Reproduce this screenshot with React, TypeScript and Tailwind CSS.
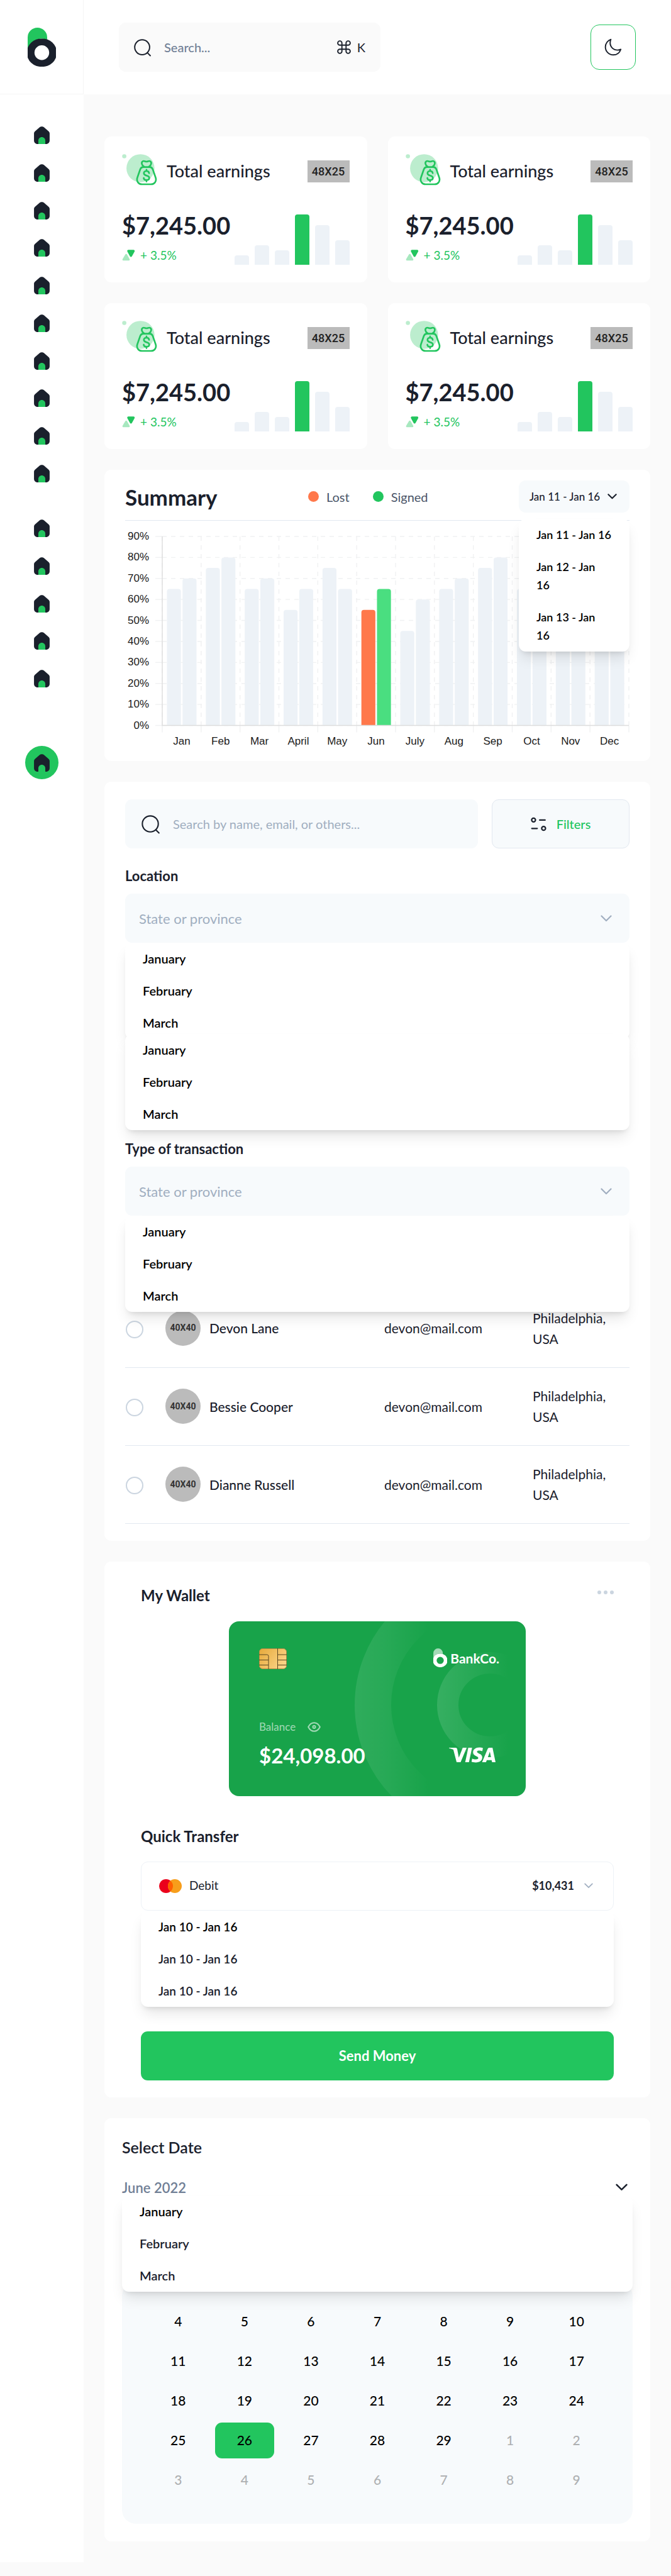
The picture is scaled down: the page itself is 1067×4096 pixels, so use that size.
import { useState } from "react";
import { SiVisa } from "react-icons/si";

function LogoMark({ className, pill, ring }: { className: string; pill: string; ring: string }) {
  return (
    <svg viewBox="0 0 45 62" className={className} fill="none" aria-hidden="true">
      <path d="M0 15.5a15.5 15.5 0 0 1 31 0V19.100A22.300 22.300 0 0 0 0.200 39.750H0Z" fill={pill} />
      <path
        fillRule="evenodd"
        clipRule="evenodd"
        d="M22.500 17.500a22.300 22.300 0 1 1 0 44.500a22.300 22.300 0 1 1 0 -44.500ZM22.500 28a11.700 11.700 0 1 0 0 23.400a11.700 11.700 0 1 0 0 -23.400Z"
        fill={ring}
      />
    </svg>
  );
}

function HomeIcon({ door = "#22C55E" }: { door?: string }) {
  return (
    <svg viewBox="0 0 18 21" className="h-[29px] w-[25px]" fill="none" aria-hidden="true">
      <path
        d="M0 8.84719C0 7.99027 0.366443 7.17426 1.00691 6.60496L6.34255 1.86217C7.85809 0.515019 10.1419 0.515019 11.6575 1.86217L16.9931 6.60496C17.6336 7.17426 18 7.99027 18 8.84719V17C18 19.2091 16.2091 21 14 21H4C1.79086 21 0 19.2091 0 17V8.84719Z"
        fill="#1A202C"
      />
      <path d="M5 17C5 14.7909 6.79086 13 9 13C11.2091 13 13 14.7909 13 17V21H5V17Z" fill={door} />
    </svg>
  );
}

function SearchIcon({ className }: { className: string }) {
  return (
    <svg viewBox="0 0 21 22" className={className} fill="none" stroke="#1A202C" strokeWidth="1.5" strokeLinecap="round" aria-hidden="true">
      <circle cx="9.8" cy="10.68" r="8.99" />
      <path d="M16.05 17.39L19.58 20.91" />
    </svg>
  );
}

function Chevron({ className, color, width = 2 }: { className: string; color: string; width?: number }) {
  return (
    <svg viewBox="0 0 18 11" className={className} fill="none" stroke={color} strokeWidth={width} strokeLinecap="round" strokeLinejoin="round" aria-hidden="true">
      <path d="M1.500 1.500L9 9L16.500 1.500" />
    </svg>
  );
}

function MoneyBag() {
  return (
    <svg viewBox="0 0 40 39" className="h-[54px] w-[56px] shrink-0" fill="none" strokeLinecap="round" strokeLinejoin="round" aria-hidden="true">
      <circle cx="21" cy="16.2" r="16.1" fill="#22C55E" fillOpacity="0.3" />
      <circle cx="2.4" cy="2.5" r="2.4" fill="#22C55E" fillOpacity="0.3" />
      <g stroke="#22C55E" strokeWidth="1.9">
        <path d="M24.300 14.900h7.200c1.700 0 3 1 3.600 2.600l3.200 9.200c1.500 4.300-1 8-5.300 8H22.800c-4.300 0-6.800-3.700-5.300-8l3.200-9.200c.6-1.600 1.900-2.600 3.600-2.600Z" />
        <path d="M25 14.400c-3-2-3.200-5.100-1.300-6.200 1.400-.8 2.600.5 4.200.5s2.800-1.300 4.200-.5c1.900 1.100 1.700 4.200-1.300 6.200" />
        <path d="M30.900 21.900c-.2-1.600-1.400-2.400-3-2.400s-3 .9-3 2.500c0 3.600 6.200 1.800 6.200 5.300 0 1.700-1.500 2.600-3.200 2.600s-3.100-.9-3.200-2.500M27.900 17.900v1.600M27.900 29.900v1.600" />
      </g>
    </svg>
  );
}

const miniBars = ["h-[15px]", "h-[31px]", "h-[23px]", "h-[80px]", "h-[63px]", "h-[39px]"];

function EarningCard() {
  return (
    <article className="flex flex-col justify-between gap-7 rounded-[11px] bg-white p-7">
      <div className="flex items-center">
        <MoneyBag />
        <h2 className="ml-[15px] text-[27px] leading-[36px] font-medium">Total earnings</h2>
        <span className="ml-auto flex h-[35px] w-[67px] items-center justify-center bg-[#BBBBBB] text-[18px] font-medium text-[#222] [font-family:Roboto,sans-serif]">
          48X25
        </span>
      </div>
      <div className="flex items-end justify-between">
        <div>
          <p className="text-[38px] leading-[63px] font-bold">$7,245.00</p>
          <p className="flex items-center gap-2 text-[19px] leading-[31px] text-[#22C55E]">
            <svg viewBox="0 0 15 13" className="h-[18px] w-[21px]" strokeLinejoin="round" aria-hidden="true">
              <path d="M7.200 1.500h6L10.200 7Z" fill="#22C55E" stroke="#22C55E" strokeWidth="2.600" />
              <path d="M1.500 11.400h6.200L4.700 6Z" fill="#A7E8BF" stroke="#A7E8BF" strokeWidth="2.200" />
            </svg>
            + 3.5%
          </p>
        </div>
        <div className="flex items-end gap-[9px]" role="img" aria-label="Earnings trend">
          {miniBars.map((h, i) => (
            <span key={i} className={`w-[23px] rounded-t-[4px] ${h} ${i === 3 ? "bg-[#22C55E]" : "bg-[#EDF2F7]"}`} />
          ))}
        </div>
      </div>
    </article>
  );
}

const months: [string, number, number][] = [
  ["Jan", 65, 70],
  ["Feb", 75, 80],
  ["Mar", 65, 70],
  ["April", 55, 65],
  ["May", 75, 65],
  ["Jun", 55, 65],
  ["July", 45, 60],
  ["Aug", 65, 70],
  ["Sep", 75, 80],
  ["Oct", 65, 60],
  ["Nov", 60, 65],
  ["Dec", 60, 65],
];

function SummaryChart() {
  const x0 = 59;
  const x1 = 801;
  const yTop = 13;
  const yBase = 313.5;
  const col = (x1 - x0) / 12;
  const y = (v: number) => yBase - (v * (yBase - yTop)) / 90;
  return (
    <svg viewBox="0 0 802 350" className="mt-3 block w-full" role="img" aria-label="Lost and signed per month">
      <g stroke="#F0F1F2" strokeWidth="1.400">
        {Array.from({ length: 10 }, (_, i) => (
          <g key={i}>
            <path d={`M${x0} ${y(i * 10)}H${x1}`} strokeDasharray="7 7" />
            <path d={`M${x0 - 11} ${y(i * 10)}H${x0}`} />
          </g>
        ))}
        {Array.from({ length: 13 }, (_, i) => (
          <g key={i}>
            <path d={`M${x0 + i * col} ${yTop}V${yBase}`} strokeDasharray="7 7" />
            <path d={`M${x0 + i * col} ${yBase}v11`} />
          </g>
        ))}
      </g>
      {months.map(([name, a, b], i) => {
        const left = x0 + i * col + 7.5;
        const hot = name === "Jun";
        return [a, b].map((v, j) => {
          const bx = left + j * 24.8;
          return (
            <path
              key={`${name}${j}`}
              d={`M${bx} ${yBase}V${y(v) + 4}q0 -4 4 -4h14.200q4 0 4 4V${yBase}Z`}
              fill={hot ? (j === 0 ? "#FF784B" : "#4ADE80") : "#EDF2F7"}
            />
          );
        });
      })}
      <path d={`M${x0} ${yTop}V${yBase}H${x1}`} fill="none" stroke="#DDDDDD" strokeWidth="1.400" />
      <g fill="#1A1A1A" fontSize="17" fontFamily="Liberation Sans, Arial, sans-serif">
        {Array.from({ length: 10 }, (_, i) => (
          <text key={i} x="38" y={y(i * 10) + 5} textAnchor="end">
            {`${i * 10}%`}
          </text>
        ))}
        {months.map(([name], i) => (
          <text key={name} x={x0 + (i + 0.5) * col} y="344" textAnchor="middle">
            {name}
          </text>
        ))}
      </g>
    </svg>
  );
}

const menuShadow = "shadow-[0_14px_21px_-4px_rgba(0,0,0,0.1),0_6px_8px_-5px_rgba(0,0,0,0.12)]";

function Menu({ items, className = "", size = "text-[20px]", tail = "text-black" }: { items: string[]; className?: string; size?: string; tail?: string }) {
  return (
    <ul className={`relative overflow-hidden rounded-[11px] bg-white ${menuShadow} ${className}`}>
      {items.map((item, i) => (
        <li key={i}>
          <button type="button" className={`block w-full px-7 py-[11px] text-left leading-[29px] font-semibold ${size} ${i === 0 ? "text-black" : tail}`}>
            {item}
          </button>
        </li>
      ))}
    </ul>
  );
}

function Field({ id, label }: { id: string; label: string }) {
  return (
    <>
      <p id={id} className="mb-3 text-[22px] leading-[33px] font-bold">{label}</p>
      <button
        type="button"
        aria-labelledby={id}
        aria-haspopup="listbox"
        className="flex h-[78px] w-full items-center justify-between rounded-[11px] bg-[#F7FAFC] pr-7 pl-[22px] text-[22px] text-[#A0AEC0]"
      >
        State or province
        <Chevron className="h-[11px] w-[18px]" color="#A0AEC0" width={2.2} />
      </button>
    </>
  );
}

const monthItems = ["January", "February", "March"];
const people = ["Devon Lane", "Bessie Cooper", "Dianne Russell"];

const calendar: number[] = [
  4, 5, 6, 7, 8, 9, 10, 11, 12, 13, 14, 15, 16, 17, 18, 19, 20, 21, 22, 23, 24, 25, 26, 27, 28, 29, 1, 2, 3, 4, 5, 6, 7, 8, 9,
];

function Sidebar() {
  return (
    <aside className="mb-6 flex w-[133px] shrink-0 flex-col items-center bg-white">
      <a href="#" aria-label="BankCo" className="flex h-[150px] w-full items-center justify-center border-r border-b border-[#F5F5F5]">
        <LogoMark className="h-[62px] w-[45px]" pill="#22C55E" ring="#1A202C" />
      </a>
      <nav className="flex flex-col items-center pt-[50px]" aria-label="Main">
        <ul className="flex h-[567px] flex-col justify-between">
          {Array.from({ length: 10 }, (_, i) => (
            <li key={i}>
              <a href="#" aria-label={`Menu ${i + 1}`}><HomeIcon /></a>
            </li>
          ))}
        </ul>
        <ul className="mt-[58px] flex h-[268px] flex-col justify-between">
          {Array.from({ length: 5 }, (_, i) => (
            <li key={i}>
              <a href="#" aria-label={`Help ${i + 1}`}><HomeIcon /></a>
            </li>
          ))}
        </ul>
        <a href="#" aria-label="Upgrade" className="mt-[93px] flex size-[53px] items-center justify-center rounded-full bg-[#22C55E]">
          <HomeIcon />
        </a>
      </nav>
    </aside>
  );
}

function Header() {
  return (
    <header className="flex h-[150px] items-center justify-between bg-white pr-14 pl-14">
      <label className="flex h-[78px] w-[416px] items-center rounded-[11px] bg-[#FAFAFA] px-6">
        <SearchIcon className="h-[29px] w-[28px] shrink-0" />
        <input
          type="search"
          aria-label="Search"
          placeholder="Search..."
          className="mx-5 min-w-0 flex-1 bg-transparent text-[20px] font-medium outline-none placeholder:text-[#718096]"
        />
        <svg viewBox="2 2 20 20" className="size-[22px] shrink-0" fill="none" stroke="#1A202C" strokeWidth="1.700" aria-hidden="true">
          <path d="M15 6v12a3 3 0 1 0 3-3H6a3 3 0 1 0 3 3V6a3 3 0 1 0-3 3h12a3 3 0 1 0-3-3" />
        </svg>
        <kbd className="ml-2.5 text-[20px] [font-family:Lato,sans-serif]">K</kbd>
      </label>
      <button type="button" aria-label="Dark mode" className="flex size-[72px] items-center justify-center rounded-[14px] border border-[#22C55E]">
        <svg viewBox="0 0 20 20" className="size-[28px]" fill="none" stroke="#1A202C" strokeWidth="1.400" strokeLinejoin="round" aria-hidden="true">
          <path d="M7.400 1.200C6.900 2.300 6.600 3.600 6.600 5C6.600 9.800 10.300 13.300 15 13.300C16.300 13.300 17.600 13 18.700 12.500C17.500 16.200 14.200 18.800 10.200 18.800C5.200 18.800 1.200 14.800 1.200 9.800C1.200 5.800 3.800 2.400 7.400 1.200Z" />
        </svg>
      </button>
    </header>
  );
}

function Summary() {
  return (
    <section className="rounded-[11px] bg-white px-[33px] pt-[17px] pb-5">
      <div className="flex items-center justify-between border-b border-[#E2E8F0] pb-3">
        <h2 className="text-[35px] leading-[44px] font-bold">Summary</h2>
        <div className="flex gap-[37px] text-[20px] leading-[28px] text-[#4A5568]">
          <span className="flex items-center gap-3"><i className="size-[17px] rounded-full bg-[#FF784B]" />Lost</span>
          <span className="flex items-center gap-3"><i className="size-[17px] rounded-full bg-[#22C55E]" />Signed</span>
        </div>
        <div className="relative w-[176px]">
          <button type="button" aria-haspopup="listbox" className="flex h-[51px] w-full items-center justify-between rounded-[11px] bg-[#F7FAFC] pr-5 pl-[17px] text-[17px] font-medium whitespace-nowrap">
            Jan 11 - Jan 16
            <Chevron className="h-[9px] w-[15px]" color="#1A202C" width={2.6} />
          </button>
          <ul className={`absolute top-full right-0 mt-[10px] w-full rounded-[11px] bg-white ${menuShadow}`}>
            {["11", "12", "13"].map((day) => (
              <li key={day}>
                <button type="button" className="block w-full py-[11px] pl-7 text-left text-[18px] leading-[29px] font-semibold whitespace-nowrap text-black">
                  Jan {day} - Jan {day !== "11" && <br />}16
                </button>
              </li>
            ))}
          </ul>
        </div>
      </div>
      <SummaryChart />
    </section>
  );
}

function Transactions() {
  const [picked, setPicked] = useState<string[]>([]);
  return (
    <section className="rounded-[11px] bg-white px-[33px] pt-7 pb-[27px]">
      <div className="mb-[27px] flex gap-[22px]">
        <label className="flex h-[78px] flex-1 items-center rounded-[11px] bg-[#F7FAFC] px-[26px]">
          <SearchIcon className="h-[31px] w-[30px] shrink-0" />
          <input
            type="search"
            aria-label="Search transactions"
            placeholder="Search by name, email, or others..."
            className="ml-5 min-w-0 flex-1 bg-transparent text-[20px] outline-none placeholder:text-[#A0AEC0]"
          />
        </label>
        <button type="button" className="flex h-[78px] w-[219px] items-center justify-center gap-4 rounded-[11px] border border-[#E2E8F0] bg-[#F7FAFC] text-[20px] font-medium text-[#22C55E]">
          <svg viewBox="0 0 18 16" className="h-[23px] w-[25px]" fill="none" stroke="#1A202C" strokeWidth="1.600" strokeLinecap="round" aria-hidden="true">
            <circle cx="3.200" cy="3.200" r="2.200" />
            <circle cx="14.700" cy="12.800" r="2.200" />
            <path d="M10.200 3.300h6.200M1.200 12.900h6.200" />
          </svg>
          Filters
        </button>
      </div>
      <Field id="location" label="Location" />
      <Menu items={monthItems} />
      <Menu items={monthItems} className="-mt-2" />
      <div className="mt-[13px]">
        <Field id="kind" label="Type of transaction" />
        <Menu items={monthItems} className="z-10" />
      </div>
      <table className="-mt-9 w-full text-left text-[21px] leading-[33px]">
        <tbody>
          {people.map((name) => (
            <tr key={name} className="h-[124px] border-b border-[#E2E8F0]">
              <td className="w-16">
                <input
                  type="checkbox"
                  aria-label={`Select ${name}`}
                  checked={picked.includes(name)}
                  onChange={() => setPicked((p) => (p.includes(name) ? p.filter((n) => n !== name) : [...p, name]))}
                  className="mt-1 ml-px block size-7 appearance-none rounded-full border-2 border-[#CBD5E0] checked:bg-[#22C55E]"
                />
              </td>
              <td>
                <div className="flex items-center gap-[14px] font-medium">
                  <span className="flex size-14 items-center justify-center rounded-full bg-[#BBBBBB] text-[14px] font-bold text-[#333] [font-family:Roboto,sans-serif]">
                    40X40
                  </span>
                  {name}
                </div>
              </td>
              <td className="w-[236px]">devon@mail.com</td>
              <td className="w-[154px] pr-5">Philadelphia, USA</td>
            </tr>
          ))}
        </tbody>
      </table>
    </section>
  );
}

function BankCard() {
  return (
    <div className="relative mx-auto h-[278px] w-[472px] max-w-full overflow-hidden rounded-[16px] bg-[#18A34A] text-white">
      <svg viewBox="0 0 472 278" className="absolute inset-0 h-full w-full" fill="none" aria-hidden="true">
        <defs>
          <linearGradient id="ringA" gradientUnits="userSpaceOnUse" x1="200" y1="0" x2="318" y2="0">
            <stop stopColor="#fff" stopOpacity="0.1" />
            <stop offset="0.4" stopColor="#fff" stopOpacity="0.07" />
            <stop offset="1" stopColor="#fff" stopOpacity="0" />
          </linearGradient>
          <linearGradient id="ringB" gradientUnits="userSpaceOnUse" x1="331" y1="0" x2="446" y2="0">
            <stop stopColor="#fff" stopOpacity="0.13" />
            <stop offset="1" stopColor="#fff" stopOpacity="0" />
          </linearGradient>
        </defs>
        <circle cx="408" cy="133" r="179" stroke="url(#ringA)" strokeWidth="58" />
        <circle cx="415" cy="133" r="67" stroke="url(#ringB)" strokeWidth="34" />
      </svg>
      <div className="relative flex h-full flex-col pt-[43px] pr-[42px] pb-[43px] pl-12">
        <div className="flex items-start justify-between">
          <svg viewBox="0 0 44 33" className="h-[33px] w-[44px]" fill="none" aria-hidden="true">
            <defs>
              <linearGradient id="chip" x1="0" y1="0" x2="44" y2="33" gradientUnits="userSpaceOnUse">
                <stop stopColor="#E6A93A" />
                <stop offset="1" stopColor="#FFDA92" />
              </linearGradient>
            </defs>
            <rect x="0.500" y="0.500" width="43" height="32" rx="5" fill="url(#chip)" stroke="#B08A45" />
            <path d="M29.500 0v33M15 33V12.500q0-2.500-2.500-2.500H0M0 18.500h15M0 26.500h15M29.500 10H44M29.500 18.500H44M29.500 26.500H44" stroke="#5B4620" />
          </svg>
          <p className="flex items-end gap-[5px]">
            <LogoMark className="h-[30px] w-[22px]" pill="#A3DAB7" ring="#fff" />
            <span className="text-[21px] leading-[28px] font-bold">BankCo.</span>
          </p>
        </div>
        <div className="mt-auto flex items-center gap-[19px] text-[17px] leading-[22px] text-white/60">
          Balance
          <svg viewBox="0 0 21 16" className="h-4 w-[21px]" fill="none" stroke="currentColor" strokeWidth="2" aria-hidden="true">
            <path d="M1.200 8C3.400 3.700 6.700 1.200 10.500 1.200S17.600 3.700 19.800 8C17.600 12.300 14.300 14.800 10.500 14.800S3.400 12.300 1.200 8Z" strokeLinejoin="round" />
            <circle cx="10.500" cy="8" r="2" />
          </svg>
        </div>
        <div className="mt-3 flex items-center justify-between pr-1.5">
          <p className="text-[33px] leading-[44px] font-bold">$24,098.00</p>
          <SiVisa viewBox="0 8 24 8" className="h-[25px] w-[74px]" title="Visa" />
        </div>
      </div>
    </div>
  );
}

function Wallet() {
  return (
    <section className="rounded-[11px] bg-white px-[58px] pt-[37px] pb-[27px]">
      <div className="mb-[25px] flex items-start justify-between">
        <h2 className="text-[24px] leading-[33px] font-bold">My Wallet</h2>
        <button type="button" aria-label="Wallet options" className="flex h-6 items-center gap-1">
          <i className="size-1.5 rounded-full bg-[#CBD5E0]" />
          <i className="size-1.5 rounded-full bg-[#CBD5E0]" />
          <i className="size-1.5 rounded-full bg-[#CBD5E0]" />
        </button>
      </div>
      <BankCard />
      <h2 className="mt-[47px] text-[24px] leading-[33px] font-bold">Quick Transfer</h2>
      <button type="button" aria-haspopup="listbox" className="mt-6 flex h-[78px] w-full items-center rounded-[11px] border border-[#EDF2F7] pr-8 pl-7 text-[19px]">
        <svg viewBox="0 0 36 22" className="mr-3 h-[22px] w-9" aria-hidden="true">
          <circle cx="11" cy="11" r="11" fill="#EB001B" />
          <circle cx="25" cy="11" r="11" fill="#F79E1B" />
          <path d="M18 2.500a11 11 0 0 1 0 17a11 11 0 0 1 0-17Z" fill="#FF5F00" />
        </svg>
        Debit
        <span className="mr-4 ml-auto text-[18px] font-bold">$10,431</span>
        <Chevron className="h-[9px] w-[14px]" color="#A0AEC0" width={2.2} />
      </button>
      <Menu items={["Jan 10 - Jan 16", "Jan 10 - Jan 16", "Jan 10 - Jan 16"]} size="text-[19px]" tail="text-[#1A202C]" />
      <button type="button" className="mt-[39px] h-[78px] w-full rounded-[11px] bg-[#22C55E] text-[22px] font-bold text-white">
        Send Money
      </button>
    </section>
  );
}

function DatePicker() {
  return (
    <section className="rounded-[11px] bg-white p-7">
      <h2 className="text-[25px] leading-[36px] font-semibold">Select Date</h2>
      <button type="button" aria-haspopup="listbox" className="mt-[30px] flex h-[33px] w-full items-center justify-between pr-2 text-[22px] leading-[33px] font-semibold text-[#718096]">
        June 2022
        <Chevron className="h-[12px] w-[19px]" color="#1A202C" width={2.4} />
      </button>
      <Menu items={monthItems} tail="text-[#1A202C]" className="z-10 -mt-1" />
      <div className="-mt-[15px] grid grid-cols-7 gap-x-[11px] gap-y-1.5 rounded-[22px] bg-[#F7FAFC] px-[42px] pt-[34px] pb-[41px]">
        {calendar.map((d, i) => (
          <button
            key={i}
            type="button"
            className={`h-[57px] rounded-[11px] text-[21px] font-medium ${i === 22 ? "bg-[#22C55E] text-black" : i > 25 ? "text-[#AEB0B2]" : "text-black"}`}
          >
            {d}
          </button>
        ))}
      </div>
    </section>
  );
}

export default function App() {
  return (
    <div className="flex bg-[#FAFAFA] text-[#1A202C] [font-family:Lato,sans-serif]">
      <Sidebar />
      <div className="min-w-0 flex-1">
        <Header />
        <main className="flex flex-col gap-[33px] px-[33px] pt-[67px] pb-[57px]">
          <div className="grid grid-cols-2 gap-[33px]">
            <EarningCard />
            <EarningCard />
            <EarningCard />
            <EarningCard />
          </div>
          <Summary />
          <Transactions />
          <Wallet />
          <DatePicker />
        </main>
      </div>
    </div>
  );
}
